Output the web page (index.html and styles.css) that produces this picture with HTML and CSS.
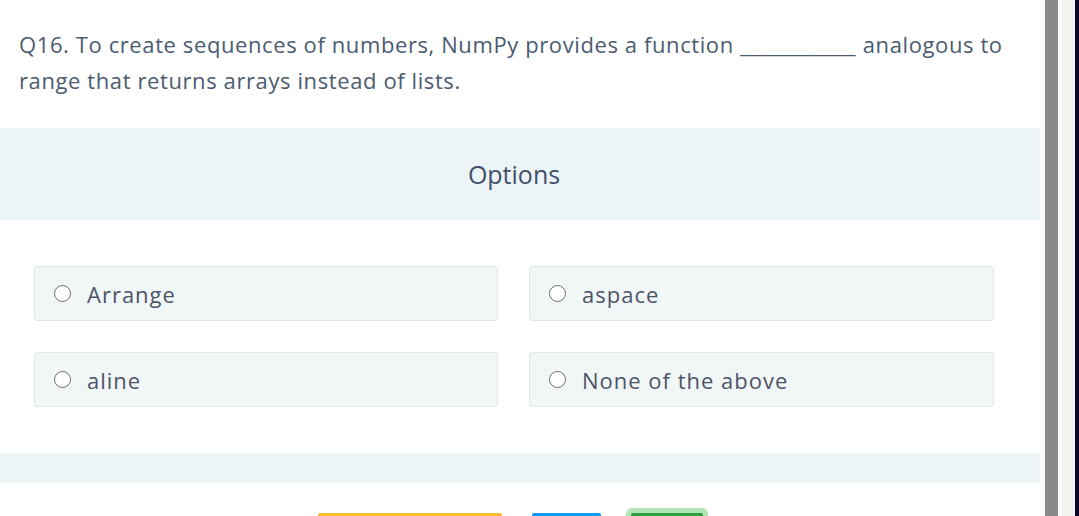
FILE: index.html
```html
<!DOCTYPE html>
<html>
<head>
<meta charset="utf-8">
<link rel="stylesheet" href="styles.css">
</head>
<body>
<div class="page">
  <main class="main">
    <p class="question">Q16. To create sequences of numbers, NumPy provides a function <span class="blank">__________</span> analogous to range that returns arrays instead of lists.</p>
    <div class="options-head">Options</div>
    <div class="options">
      <label class="option"><span class="radio"></span><span class="opt-text">Arrange</span></label>
      <label class="option"><span class="radio"></span><span class="opt-text">aspace</span></label>
      <label class="option"><span class="radio"></span><span class="opt-text">aline</span></label>
      <label class="option"><span class="radio"></span><span class="opt-text">None of the above</span></label>
    </div>
    <div class="band"></div>
    <div class="buttons">
      <span class="btn btn-yellow"></span>
      <span class="btn btn-blue"></span>
      <span class="btn-ring"><span class="btn btn-green"></span></span>
    </div>
  </main>
  <div class="scroll-track"><div class="scroll-thumb"></div></div>
  <div class="side-light"></div>
  <div class="side-dark"></div>
</div>
</body>
</html>
```
FILE: styles.css
```css
html, body {
  margin: 0;
  padding: 0;
  background: #ffffff;
  overflow: hidden;
}
.page {
  display: flex;
  width: 1079px;
  height: 516px;
}
.main {
  width: 1040px;
  flex: none;
  background: #ffffff;
  font-family: "Open Sans", sans-serif;
  color: #4b5b70;
}
.question {
  margin: 0;
  padding: 26px 20px 0 19px;
  font-size: 22px;
  letter-spacing: 0.6px;
  line-height: 36px;
  height: 128px;
  box-sizing: border-box;
}
.blank {
  display: inline-block;
  letter-spacing: 0;
  transform: scaleX(1.2);
  transform-origin: left center;
  margin-right: 20px;
}
.options-head {
  height: 92px;
  background: #ecf4f7;
  display: flex;
  align-items: center;
  justify-content: center;
  padding-right: 12px;
  font-family: "Open Sans", sans-serif;
  font-size: 25px;
  color: #3f5068;
}
.options {
  display: grid;
  grid-template-columns: 464px 465px;
  grid-auto-rows: 55px;
  align-content: start;
  column-gap: 31px;
  row-gap: 31px;
  padding: 46px 0 0 34px;
  height: 233px;
  box-sizing: border-box;
}
.option {
  height: 55px;
  box-sizing: border-box;
  background: #f1f6f7;
  border: 1px solid #e2e8ea;
  border-radius: 3px;
  display: flex;
  align-items: center;
  padding-left: 19px;
  font-size: 22px;
  letter-spacing: 1px;
  color: #4e5468;
}
.radio {
  width: 15px;
  height: 15px;
  border: 1.5px solid #6b6b6b;
  border-radius: 50%;
  background: #ffffff;
  flex: none;
  margin-right: 16px;
}
.band {
  height: 30px;
  background: #ecf4f7;
}
.buttons {
  display: flex;
  align-items: flex-start;
  padding: 25px 0 0 318px;
  height: 33px;
  box-sizing: border-box;
}
.btn {
  display: block;
  height: 20px;
  border-radius: 2px 2px 0 0;
}
.btn-yellow {
  width: 184px;
  background: #fbbb33;
  margin-top: 5px;
}
.btn-blue {
  width: 69px;
  background: #0a9af2;
  margin: 5px 0 0 30px;
}
.btn-ring {
  display: block;
  margin-left: 25px;
  padding: 5px 5px 0 5px;
  background: #b3e6b6;
  border-radius: 6px 6px 0 0;
  height: 20px;
}
.btn-green {
  width: 72px;
  background: #2c9e3e;
}
.scroll-track {
  width: 22px;
  flex: none;
  background: #fafafa;
  padding-left: 5px;
  box-sizing: border-box;
}
.scroll-thumb {
  width: 13px;
  height: 100%;
  background: #888888;
}
.side-light {
  width: 13px;
  flex: none;
  background: #f2f2ee;
}
.side-dark {
  width: 4px;
  flex: none;
  background: #0a0a2c;
}
```
